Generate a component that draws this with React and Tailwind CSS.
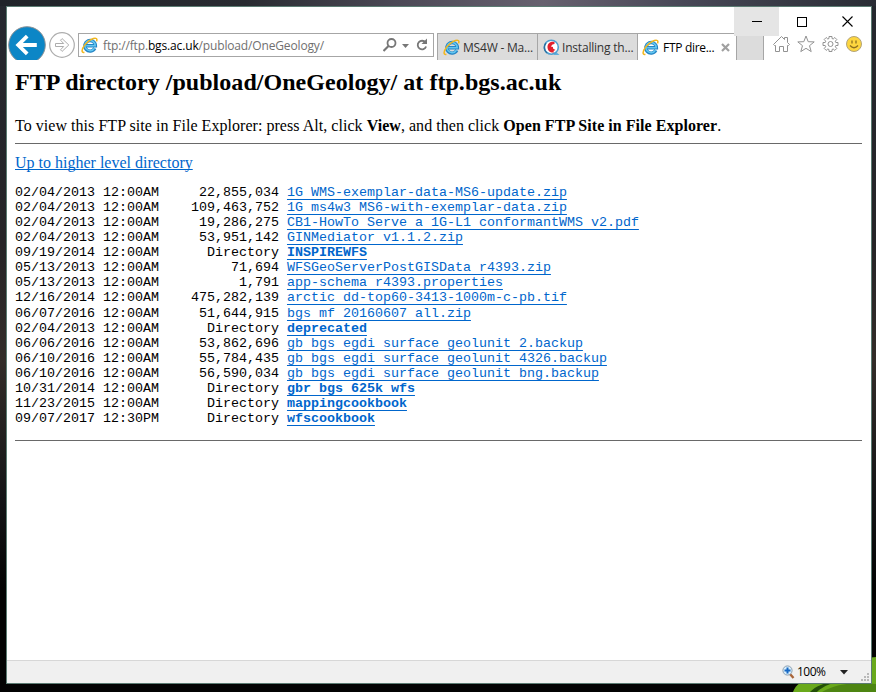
const files = [
  ["02/04/2013 12:00AM", "22,855,034", "1G WMS-exemplar-data-MS6-update.zip"],
  ["02/04/2013 12:00AM", "109,463,752", "1G ms4w3 MS6-with-exemplar-data.zip"],
  ["02/04/2013 12:00AM", "19,286,275", "CB1-HowTo Serve a 1G-L1 conformantWMS v2.pdf"],
  ["02/04/2013 12:00AM", "53,951,142", "GINMediator v1.1.2.zip"],
  ["09/19/2014 12:00AM", "Directory", "INSPIREWFS"],
  ["05/13/2013 12:00AM", "71,694", "WFSGeoServerPostGISData r4393.zip"],
  ["05/13/2013 12:00AM", "1,791", "app-schema r4393.properties"],
  ["12/16/2014 12:00AM", "475,282,139", "arctic dd-top60-3413-1000m-c-pb.tif"],
  ["06/07/2016 12:00AM", "51,644,915", "bgs mf 20160607 all.zip"],
  ["02/04/2013 12:00AM", "Directory", "deprecated"],
  ["06/06/2016 12:00AM", "53,862,696", "gb bgs egdi surface geolunit 2.backup"],
  ["06/10/2016 12:00AM", "55,784,435", "gb bgs egdi surface geolunit 4326.backup"],
  ["06/10/2016 12:00AM", "56,590,034", "gb bgs egdi surface geolunit bng.backup"],
  ["10/31/2014 12:00AM", "Directory", "gbr bgs 625k wfs"],
  ["11/23/2015 12:00AM", "Directory", "mappingcookbook"],
  ["09/07/2017 12:30PM", "Directory", "wfscookbook"],
];

function Explorer() {
  return (
    <svg width="17" height="17" viewBox="0 0 17 17" className="shrink-0" fill="none">
      <path d="M13.800 11.300a5.300 5.300 0 1 1 .6-2.500H5" stroke="#2484c4" strokeWidth="3.400" />
      <path d="M13.500 11.200a5.100 5.100 0 1 1 .7-2.500H5.200" stroke="#62c6f0" strokeWidth="1.600" />
      <path d="M3.400 15.300C.3 16.200.2 12.500 3.800 7.900 7.500 3.200 13.500.2 15.300 1.500c.8.600.7 1.700.2 2.900" stroke="#f2b61c" strokeWidth="1.500" />
    </svg>
  );
}

function QLogo() {
  return (
    <svg width="17" height="17" viewBox="0 0 17 17" className="shrink-0" fill="none">
      <path d="M12 12l4.500 4H11z" fill="#5faedc" />
      <circle cx="8.300" cy="8.200" r="7" fill="#fff" stroke="#4f9fcf" strokeWidth="1.600" />
      <path d="M3 4a7 7 0 0 0 1 10" stroke="#2b6f9f" strokeWidth="1.500" />
      <path d="M11.500 3C7 1.800 4.300 5 4.500 8.500c.2 3.500 3 5.500 6.500 5l-.5-1.500 2-1-2.500-1.500V8L7.800 7.500 9.500 5.500l2-.5z" fill="#e3202c" />
    </svg>
  );
}

function BackButton() {
  return (
    <svg width="38" height="34" viewBox="0 0 38 34" className="shrink-0">
      <circle cx="19" cy="19" r="18.300" fill="#0c86c6" stroke="#8d9296" strokeWidth="1" />
      <path d="M28.800 19H10.500M19.200 10.200L10.200 19l9 8.800" fill="none" stroke="#fff" strokeWidth="3.800" />
    </svg>
  );
}

function ForwardButton() {
  return (
    <svg width="26" height="26" viewBox="0 0 26 26" className="shrink-0" fill="none" stroke="#adadad">
      <circle cx="13" cy="13" r="12.300" strokeWidth="1.200" />
      <path d="M6.500 11.500h8.200L11.500 8.200l1.600-1.600L19.800 13l-6.700 6.400-1.600-1.600 3.200-3.300H6.500z" />
    </svg>
  );
}

export default function App() {
  return (
    <div className="relative flex h-[692px] w-[876px] overflow-hidden bg-[linear-gradient(180deg,#25282f_0%,#262427_35%,#332c28_52%,#141416_72%,#030303_85%)] pt-[6px] pl-[6px]">
      <div className="absolute top-0 left-0 h-[6px] w-full bg-[linear-gradient(90deg,#202329_0%,#292b31_28%,#4b4855_45%,#67616f_62%,#484857_78%,#292c34_100%)]" />
      <svg width="90" height="38" viewBox="0 0 90 38" className="absolute right-0 bottom-0">
        <path d="M7 38c3-8 9-12 20-13h48l5-21 10-1v35z" fill="#69a91b" />
        <path d="M24 38c6-6 13-9 25-10-10 4-14 6-18 10z" fill="#234f08" />
        <path d="M36 38c15-8 27-10 54-8v8z" fill="#4d8512" />
      </svg>
      <div className="relative flex h-[678px] w-[866px] flex-col border border-[#5b7b72] bg-white">
        <header className="relative flex h-[53px] shrink-0 items-end overflow-hidden pl-[1px] font-['Open_Sans',sans-serif] text-[12px] text-[#333]">
          <BackButton />
          <div className="flex h-[28px] items-start pl-[3px]">
            <ForwardButton />
          </div>
          <div className="mb-[3px] ml-[3px] flex h-[24px] w-[356px] shrink-0 items-center border border-[#a6a6a6] pl-[2px]">
            <Explorer />
            <div className="mt-px ml-[5px] w-[280px] tracking-[-0.150px] whitespace-nowrap text-[#707070]">
              ftp://ftp.<span className="text-black">bgs.ac.uk</span>/pubload/OneGeology/
            </div>
            <svg width="48" height="16" viewBox="0 0 48 16" className="shrink-0" fill="none" stroke="#777">
              <circle cx="8.500" cy="6" r="4" strokeWidth="1.800" />
              <path d="M5.500 9l-5 5" strokeWidth="2.200" />
              <path d="M19 7h7l-3.500 4z" fill="#777" stroke="none" />
              <path d="M42.500 5.500a4.300 4.300 0 1 0 .6 4" strokeWidth="1.800" />
              <path d="M44 1.500v5.500h-5.500z" fill="#777" stroke="none" />
            </svg>
          </div>
          <div className="ml-[3px] flex h-[27px] shrink-0 border-t border-l border-[#a6a6a6]">
            <div className="flex w-[100px] items-center border-r border-[#a6a6a6] bg-[#dcdcdc] pl-[5px]">
              <Explorer />
              <span className="mt-px ml-[3px] tracking-[-0.200px] whitespace-nowrap">MS4W - Ma...</span>
            </div>
            <div className="flex w-[100px] items-center border-r border-[#a6a6a6] bg-[#dcdcdc] pl-[5px]">
              <QLogo />
              <span className="mt-px ml-[2px] tracking-[-0.200px] whitespace-nowrap">Installing th...</span>
            </div>
            <div className="flex w-[98px] items-center bg-white pl-[4px] text-black">
              <Explorer />
              <span className="mt-px ml-[4px] w-[55px] tracking-[-0.300px] whitespace-nowrap">FTP dire...</span>
              <svg width="9" height="9" viewBox="0 0 9 9" className="ml-[3px]">
                <path d="M1 1l7 7M8 1L1 8" stroke="#a0a0a0" strokeWidth="2.200" />
              </svg>
            </div>
            <div className="w-[28px] border-x border-[#a6a6a6] bg-[#dcdcdc]" />
          </div>
          <div className="ml-[9px] flex h-[25px] shrink-0 items-start gap-[7px]">
            <svg width="17" height="18" viewBox="0 0 17 18" fill="none" stroke="#929292">
              <path d="M1.500 10.500L.5 9.500 8.500 1.500l3 3v-2h3v5l2 2-1 1h-1v6h-4v-5h-4v5H2.500v-6z" />
            </svg>
            <svg width="18" height="18" viewBox="0 0 18 18" fill="none" stroke="#929292">
              <path d="M9 1l2.200 5.700 6 .2-4.700 3.800 1.700 5.900L9 13.300l-5.200 3.300 1.700-5.900L.8 6.900l6-.2z" />
            </svg>
            <svg width="17" height="18" viewBox="0 0 17 18" fill="none" stroke="#929292">
              <path d="M7 1.500h3v2l1.200.5 1.600-1.500 2 2-1.500 1.700.5 1.300h2.200v3h-2.200l-.5 1.300 1.500 1.600-2 2-1.600-1.400-1.200.5v2H7v-2l-1.200-.5-1.600 1.400-2-2 1.500-1.600-.5-1.300H1v-3h2.200l.5-1.300-1.500-1.700 2-2L5.800 4 7 3.500z" />
              <circle cx="8.500" cy="9" r="2.500" />
            </svg>
            <svg width="17" height="18" viewBox="0 0 17 18">
              <circle cx="8" cy="9" r="7.500" fill="#fdd63f" stroke="#b3a47a" />
              <path d="M6 5.500v3M10 5.500v3M4 10.500q4 4.500 8 0" fill="none" stroke="#8d7020" strokeWidth="1.300" />
            </svg>
          </div>
          <div className="absolute top-0 right-0 flex h-[29px] w-[137px]">
            <div className="flex w-[45px] items-center justify-center bg-[#e5e5e5]">
              <div className="h-px w-[10px] bg-black" />
            </div>
            <div className="flex w-[46px] items-center justify-center">
              <div className="size-[10px] border border-black" />
            </div>
            <div className="flex w-[45px] items-center justify-center">
              <svg width="11" height="11" viewBox="0 0 11 11">
                <path d="M.5.5l10 10M10.500.5l-10 10" stroke="#000" strokeWidth="1.100" />
              </svg>
            </div>
          </div>
        </header>
        <main className="grow pt-[8px] pr-[9px] pl-[8px] font-['Liberation_Serif',serif] text-[16px] leading-[18px] text-black">
          <h1 className="text-[24px] leading-[28px] font-bold tracking-[0.040px]">FTP directory /pubload/OneGeology/ at ftp.bgs.ac.uk</h1>
          <p className="mt-[21px] tracking-[0.040px]">
            To view this FTP site in File Explorer: press Alt, click <b>View</b>, and then click <b>Open FTP Site in File Explorer</b>.
          </p>
          <hr className="mt-[8px] border-t border-[#696969]" />
          <div className="mt-[10px]">
            <a className="text-[#0066cc] underline decoration-1 underline-offset-1 [text-decoration-skip-ink:none]">Up to higher level directory</a>
          </div>
          <div className="mt-[13px] font-['Liberation_Mono',monospace] text-[13.333px] leading-[15.070px]">
            {files.map(([date, size, name]) => (
              <div key={name} className="flex h-[15.070px] whitespace-pre">
                <span>{date}</span>
                <span className="w-[120px] text-right">{size}</span>
                <a
                  className={
                    "ml-[8px] text-[#0066cc] underline decoration-1 underline-offset-[3px] [text-decoration-skip-ink:none] " +
                    (size === "Directory" ? "font-bold" : "")
                  }
                >
                  {name}
                </a>
              </div>
            ))}
          </div>
          <hr className="mt-[14px] border-t border-[#696969]" />
        </main>
        <footer className="flex h-[23px] shrink-0 items-center border-t border-[#d7d7d7] bg-[#f0f0f0] pl-[775px] font-['Open_Sans',sans-serif] text-[12px] text-black">
          <svg width="13" height="14" viewBox="0 0 13 14" className="shrink-0">
            <path d="M8 9l3.500 4" stroke="#a9653a" strokeWidth="2.400" />
            <circle cx="5.500" cy="5.500" r="4.600" fill="#d7edfb" stroke="#8a9eb0" />
            <path d="M5.500 2.500v6M2.500 5.500h6" stroke="#1668c4" strokeWidth="2" />
          </svg>
          <span className="ml-[2px] w-[43px] tracking-[-0.500px]">100%</span>
          <svg width="8" height="5" viewBox="0 0 8 5" className="shrink-0">
            <path d="M0 0h8L4 4.500z" fill="#222" />
          </svg>
          <svg width="8" height="8" viewBox="0 0 8 8" className="mt-[10px] ml-[13px] shrink-0" fill="#b8b8b8">
            <path d="M6 0h2v2H6zM3 3h2v2H3zM6 3h2v2H6zM0 6h2v2H0zM3 6h2v2H3zM6 6h2v2H6z" />
          </svg>
        </footer>
      </div>
    </div>
  );
}
